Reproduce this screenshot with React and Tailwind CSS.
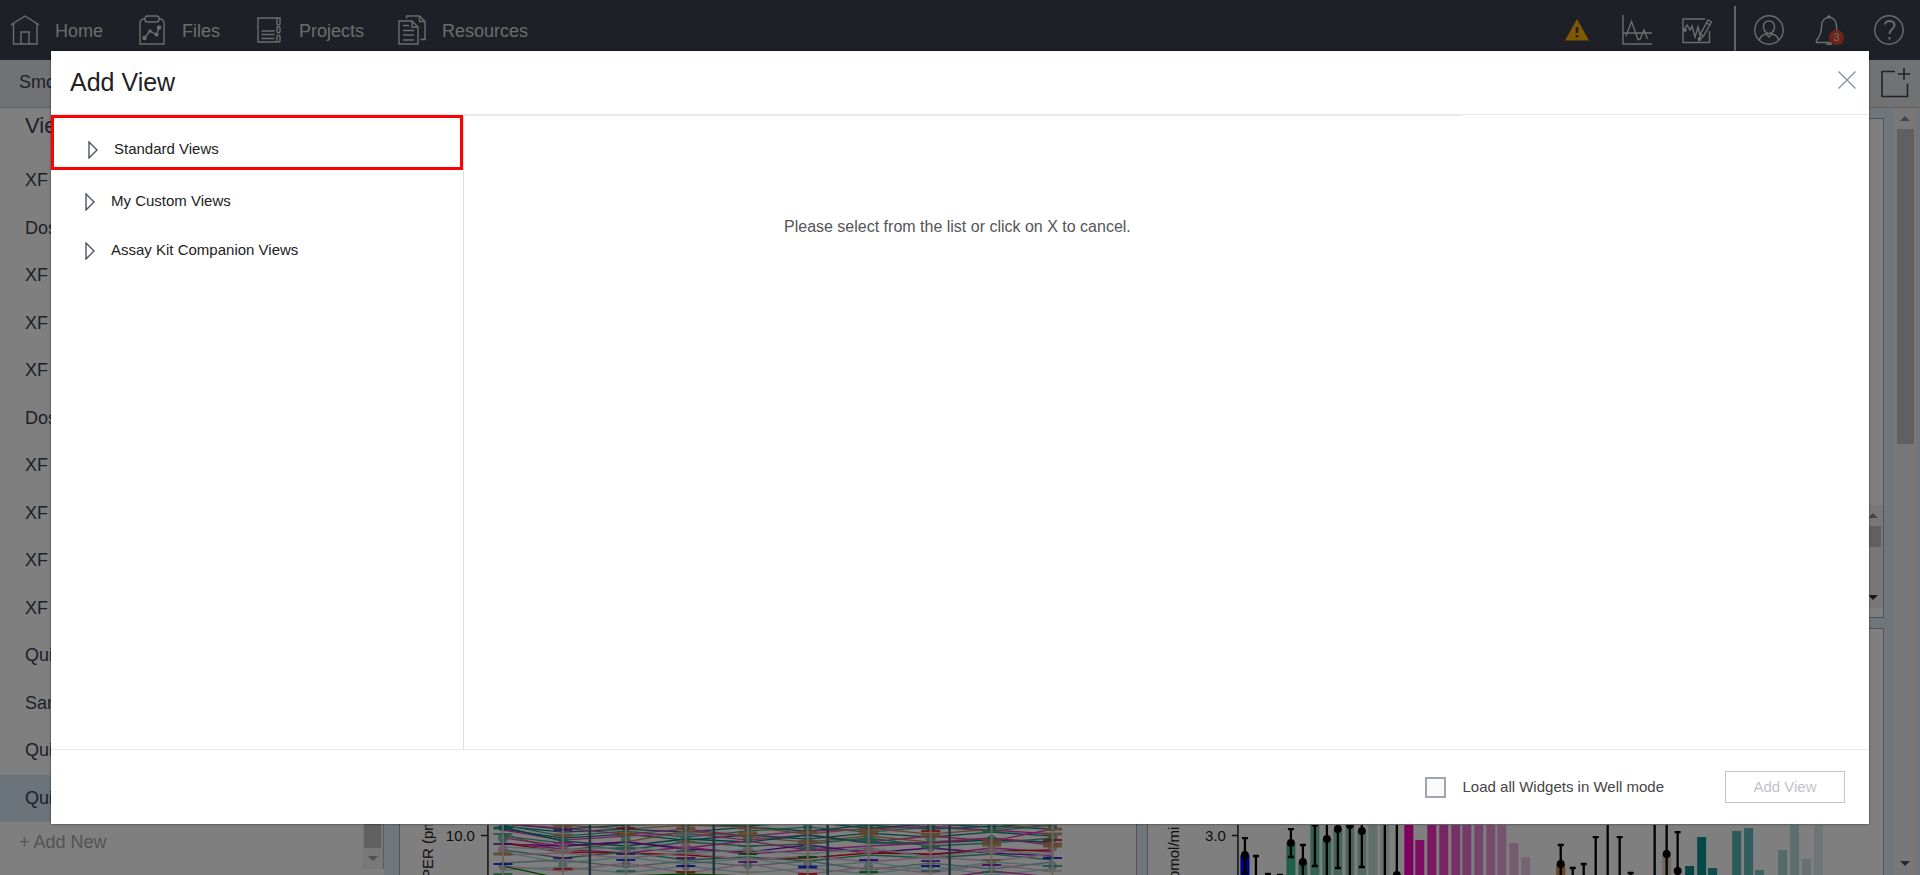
import React from "react";

const VIEWS = ["XF", "Dose", "XF", "XF", "XF", "Dose", "XF", "XF", "XF", "XF", "Quick", "Sam", "Quick", "Quick"];

const TEAL = "#0a8080";
const GREEN = "#3ea58c";
const MAGENTA = "#e838b8";
const BROWN = "#c08858";
const PALE = "#a8d8d8";
const PINK = "#eab0dc";
const RED = "#e81010";
const BLUE = "#1010f0";
const PURPLE = "#7818b8";
const SAND = "#d8ccb8";
const DKGREEN = "#008000";
const SKY = "#90b8b8";

const COLS = [503, 563, 626, 686, 748, 808, 869, 931, 992, 1053];

const LINES = [
  [TEAL, [824, 829, 825, 824, 826, 822, 828, 824, 827, 822]],
  [TEAL, [826, 832, 829, 832, 827, 831, 825, 829, 826, 829]],
  [GREEN, [825, 836, 831, 837, 831, 827, 832, 827, 831, 825]],
  [MAGENTA, [824, 828, 834, 829, 836, 831, 829, 826, 830, 834]],
  [BROWN, [822, 825, 829, 825, 827, 834, 828, 834, 829, 824]],
  [TEAL, [829, 838, 834, 840, 835, 839, 833, 837, 832, 836]],
  [MAGENTA, [830, 840, 836, 833, 840, 835, 842, 836, 841, 829]],
  [BROWN, [834, 851, 842, 831, 837, 842, 836, 842, 838, 843]],
  [TEAL, [827, 841, 846, 839, 842, 835, 843, 843, 840, 842]],
  [GREEN, [836, 843, 850, 842, 846, 844, 838, 846, 843, 838]],
  [MAGENTA, [838, 846, 842, 848, 841, 850, 846, 843, 838, 845]],
  [PURPLE, [844, 846, 842, 849, 852, 845, 853, 848, 853, 856]],
  [MAGENTA, [843, 849, 853, 847, 854, 850, 851, 855, 848, 852]],
  [RED, [843, 852, 853, 855, 859, 858, 853, 854, 851, 850]],
  [PALE, [847, 850, 847, 853, 850, 854, 848, 857, 850, 855]],
  [GREEN, [850, 858, 852, 860, 857, 861, 855, 858, 854, 860]],
  [PINK, [855, 853, 858, 853, 860, 856, 862, 857, 861, 854]],
  [PALE, [852, 863, 857, 864, 858, 867, 862, 871, 862, 866]],
  [SKY, [863, 860, 867, 861, 866, 861, 870, 863, 869, 862]],
  [PINK, [866, 871, 863, 873, 864, 874, 867, 873, 864, 872]],
  [PALE, [870, 867, 873, 866, 873, 868, 874, 866, 875, 869]],
  [DKGREEN, [866, 879, 876, 874, 876, 880, 876, 880, 879, 880]],
  [MAGENTA, [890, 886, 888, 885, 888, 886, 884, 880, 871, 877]],
];

const MARKS = [
  [[828, TEAL, 3], [834, GREEN, 2], [844, PURPLE, 2], [854, BROWN, 3], [864, BLUE, 2], [874, GREEN, 2]],
  [[826, BROWN, 4], [830, PURPLE, 2], [835, BROWN, 3], [843, MAGENTA, 2], [851, SAND, 3], [858, PURPLE, 2], [869, RED, 2]],
  [[828, RED, 2], [834, BROWN, 4], [848, GREEN, 2], [854, PURPLE, 2], [860, BLUE, 2], [871, GREEN, 2]],
  [[828, BROWN, 3], [834, SKY, 4], [842, BROWN, 2], [851, GREEN, 2], [858, PURPLE, 2], [866, BLUE, 2], [872, RED, 2]],
  [[828, BROWN, 3], [834, BROWN, 5], [846, GREEN, 2], [854, DKGREEN, 2], [862, PURPLE, 2], [872, SAND, 2]],
  [[832, BROWN, 3], [842, BROWN, 4], [848, GREEN, 3], [857, DKGREEN, 2], [867, BLUE, 3], [874, RED, 2]],
  [[832, BROWN, 7], [841, GREEN, 4], [852, PINK, 2], [860, BLUE, 2], [872, DKGREEN, 2]],
  [[831, RED, 2], [835, BROWN, 5], [847, GREEN, 3], [861, PURPLE, 2], [866, BLUE, 2], [871, GREEN, 2]],
  [[831, GREEN, 3], [843, BROWN, 7], [852, PINK, 2], [860, BROWN, 2], [865, PURPLE, 2], [872, GREEN, 2]],
  [[829, BROWN, 3], [834, BROWN, 3], [840, RED, 2], [845, BROWN, 5], [858, BLUE, 2], [866, GREEN, 2], [871, SAND, 2]],
];

// x centre, top of bar, fill
const BARS = [
  [1245, 855, "#0000ff"],
  [1291, 843, "#3ec096"],
  [1303, 862, "#58b498"],
  [1315, 810, "#66c4a6"],
  [1327, 839, "#74c4ac"],
  [1338, 829, "#88c8b4"],
  [1350, 825, "#98ccbc"],
  [1362, 831, "#a8d0c4"],
  [1373, 810, "#c4dcd4"],
  [1385, 810, "#d4e4de"],
  [1409, 810, "#fc00be"],
  [1420, 840, "#fc18c4"],
  [1432, 810, "#f430c4"],
  [1444, 810, "#f048c8"],
  [1456, 810, "#ec60cc"],
  [1467, 810, "#ec74d0"],
  [1479, 810, "#ec88d4"],
  [1491, 810, "#ec98d8"],
  [1502, 810, "#eca8dc"],
  [1514, 843, "#ecb8e0"],
  [1526, 857, "#ecc8e4"],
  [1561, 864, "#d08844"],
  [1667, 854, "#e0d4c0"],
  [1690, 866, "#088888"],
  [1702, 837, "#0c9090"],
  [1713, 868, "#209898"],
  [1737, 831, "#58b4b4"],
  [1749, 828, "#68bcbc"],
  [1760, 870, "#80c4c4"],
  [1783, 850, "#a8d4d4"],
  [1795, 810, "#b8dcdc"],
  [1807, 859, "#cce4e4"],
  [1819, 810, "#dceaea"],
];

// x centre, upper cap, lower cap, dot
const ERRORS = [
  [1245, 838, 873, 855],
  [1256, 856, 890, null],
  [1268, 874, 890, null],
  [1280, 875, 890, null],
  [1291, 829, 857, 843],
  [1303, 845, 890, 862],
  [1315, 810, 866, 823],
  [1327, 810, 890, 839],
  [1338, 810, 868, 829],
  [1350, 810, 890, 825],
  [1362, 810, 867, 831],
  [1385, 810, 890, null],
  [1397, 810, 890, 875],
  [1561, 845, 890, 864],
  [1573, 868, 890, null],
  [1584, 864, 890, null],
  [1596, 837, 890, null],
  [1608, 810, 890, null],
  [1620, 837, 890, null],
  [1631, 873, 890, null],
  [1655, 810, 890, null],
  [1667, 810, 890, 854],
  [1678, 832, 890, 871],
];

function Stroke({ className, children, ...rest }) {
  return (
    <svg aria-hidden="true" fill="none" stroke="currentColor" strokeWidth="1.4" className={className} {...rest}>
      {children}
    </svg>
  );
}

function HomeIcon() {
  return (
    <Stroke className="h-[30px] w-[30px] shrink-0" viewBox="0 0 30 30">
      <path d="M1 9.800 15 1l14 8.800M3.500 8.500V29h23.500V8.500M11 29V17h8v12" />
    </Stroke>
  );
}

function FilesIcon() {
  return (
    <Stroke className="h-[30px] w-[26px] shrink-0" viewBox="0 0 26 30">
      <path d="M6 4H3.500L1 6.500V29h24V6.500L22.500 4H20" />
      <rect x="6" y="1" width="14" height="6" rx="2.500" />
      <path d="M5.500 23 11 16l6.500 4L20 12.500" />
      <g fill="currentColor" stroke="none">
        <circle cx="5.500" cy="23" r="2.200" />
        <circle cx="11" cy="16" r="1.800" />
        <circle cx="17.500" cy="19.500" r="2" />
        <circle cx="20" cy="12.500" r="2.200" />
      </g>
    </Stroke>
  );
}

function ProjectsIcon() {
  return (
    <Stroke className="h-[26px] w-6 shrink-0" viewBox="0 0 24 26">
      <path d="M20 25H1V1h22v6l-2.500 1.500M20 1v7" />
      <path d="M4.500 14h13M4.500 17.500h13M4.500 21.500h13" />
      <rect x="20" y="9.500" width="3" height="6.500" rx="1.500" />
      <rect x="20" y="18.500" width="3" height="6.500" rx="1" />
    </Stroke>
  );
}

function ResourcesIcon() {
  return (
    <Stroke className="h-[30px] w-7 shrink-0" viewBox="0 0 28 30">
      <path d="M1 6h13l6 6v17H1zM14 6v6h6" />
      <path d="M5 10.500h6M5 15.500h11M5 20h11M5 25h11" />
      <path d="M8.500 3.500V1h13l5.500 5.500v18h-4.500M21.500 1v5.500H27" />
    </Stroke>
  );
}

function Arrow({ down, className }) {
  return (
    <svg aria-hidden="true" viewBox="0 0 10 5" className={className} fill="currentColor">
      {down ? <path d="M0 0h10L5 5z" /> : <path d="M0 5h10L5 0z" />}
    </svg>
  );
}

function TopNav() {
  const links = [
    ["Home", HomeIcon, "w-[129px] gap-[15px]"],
    ["Files", FilesIcon, "w-[118px] gap-[17px]"],
    ["Projects", ProjectsIcon, "w-[141px] gap-[18px]"],
    ["Resources", ResourcesIcon, "gap-4"],
  ];
  return (
    <header className="flex h-[60px] shrink-0 items-center bg-[#3a424e] text-[#d8d8d8]">
      <nav className="flex items-center pl-[10px] text-[18px]">
        {links.map(([label, Icon, cls]) => (
          <a key={label} href="#" className={"flex items-center " + cls}>
            <Icon />
            <span className="pt-[2px]">{label}</span>
          </a>
        ))}
      </nav>
      <div className="ml-auto flex items-center pr-4">
        <button aria-label="Warnings" className="mr-[33px]">
          <svg viewBox="0 0 24 22" className="h-[22px] w-6">
            <path d="M12 0 24 21.500H0z" fill="#ffb000" />
            <path d="M12 8v6M12 16v2.500" stroke="#3a424e" strokeWidth="2.600" />
          </svg>
        </button>
        <button aria-label="Kinetic graph" className="mr-[30px]">
          <Stroke className="h-[30px] w-[30px]" viewBox="0 0 30 30">
            <path d="M1 0v29h29M1 18h29M4 21 9.500 6.500 16 24.500h2L22 15l3.500 9" />
          </Stroke>
        </button>
        <button aria-label="Edit graph" className="mr-[22px]">
          <Stroke className="h-[30px] w-[30px]" viewBox="0 0 30 30">
            <path d="M23 4H1v23.500h26.500V16" />
            <path d="m2 15 3-5 3 5 2-4 3 11 3-10 2 8" />
            <path d="m17 25 1.500-6L26 5l3.500 2L21.500 21zM24.500 8l3.500 2M18.500 19l3 2" />
            <circle cx="3" cy="15" r="1.200" fill="currentColor" />
            <circle cx="17.500" cy="24" r="1.200" fill="currentColor" />
          </Stroke>
        </button>
        <div className="mr-[18px] h-12 w-[2px] bg-[#c4c4c4]" />
        <button aria-label="Account" className="mr-[30px]">
          <Stroke className="h-[30px] w-[30px]" viewBox="0 0 30 30">
            <circle cx="15" cy="15" r="14.200" />
            <path d="M15 6c-3.500 0-5.500 2.500-5.500 6s2.500 6.500 5.500 6.500 5.500-3 5.500-6.500S18.500 6 15 6zM5.500 25c.5-3.500 2.500-5 6.500-6l3 3 3-3c4 1 6 2.500 6.500 6" />
          </Stroke>
        </button>
        <button aria-label="Notifications, 3 new" className="relative mr-[30px]">
          <Stroke className="h-[30px] w-[30px]" viewBox="0 0 30 30">
            <path d="M15 2.500c-5 0-7.500 4-7.500 9 0 6-1 9.500-5 13.500v2.500h25V25c-4-4-5-7.500-5-13.500 0-5-2.500-9-7.500-9zM13.500 2.500c0-2 3-2 3 0M12 29.300h6" />
          </Stroke>
          <span className="absolute right-0 bottom-0 flex size-[15px] items-center justify-center rounded-full bg-[#e04830] text-[11px]">3</span>
        </button>
        <button aria-label="Help">
          <Stroke className="h-[30px] w-[30px]" viewBox="0 0 30 30">
            <circle cx="15" cy="15" r="14.200" />
            <path strokeWidth="2" d="M11 9.500c0-5 9.500-4.500 9.500.5 0 4-5 4-5 9M15.500 22v2.500" />
          </Stroke>
        </button>
      </div>
    </header>
  );
}

function Sidebar() {
  return (
    <aside className="flex w-96 shrink-0 text-[#3a4250]">
      <div className="flex min-w-0 flex-1 flex-col">
        <h2 className="flex h-[49px] shrink-0 items-start pt-[2px] pl-[25px] text-[22px] leading-8">Views</h2>
        <ul className="grid min-h-0 flex-1 auto-rows-fr text-[18px]">
          {VIEWS.map((name, i) => (
            <li key={i} className={i === VIEWS.length - 1 ? "flex items-center bg-[#d4e9f5] pl-[25px]" : "flex items-center pl-[25px]"}>
              {name}
            </li>
          ))}
        </ul>
        <div className="h-[53px] shrink-0 pt-[7px] pl-[19px] text-[18px] text-[#a6a6a6]">
          <button>+ Add New</button>
        </div>
      </div>
      <div className="mb-[6px] flex w-[22px] flex-col items-center border-r border-[#b8b8b8] bg-[#f1f1f1]">
        <div className="mt-[49px] w-[17px] flex-1 bg-[#c1c1c1]" />
        <div className="flex h-[21px] items-center text-[#a0a0a0]">
          <Arrow down className="h-[5px] w-[10px]" />
        </div>
      </div>
    </aside>
  );
}

function LineChart() {
  return (
    <svg viewBox="400 825 736 50" preserveAspectRatio="xMinYMax meet" className="h-[50px] w-full" role="img" aria-label="PER line chart">
      {LINES.map(([color, ys], i) => (
        <polyline key={i} fill="none" stroke={color} strokeWidth="1.300" points={ys.map((y, c) => COLS[c] + "," + y).join(" ")} />
      ))}
      {[590, 714, 828, 950].map((x) => (
        <path key={x} d={`M${x} 820V880`} stroke="#406878" strokeWidth="2.500" />
      ))}
      {COLS.map((x, c) => (
        <g key={x}>
          <circle cx={x} cy={827} r="4.500" fill={TEAL} opacity="0.7" />
          <circle cx={x} cy={838 + (c % 3)} r="5" fill={GREEN} opacity="0.7" />
          <circle cx={x} cy={850 - (c % 2) * 3} r="5" fill={c % 2 ? "#c88cb8" : "#c8a8b8"} opacity="0.75" />
          <circle cx={x} cy={866 - (c % 3)} r="4.500" fill={SKY} opacity="0.8" />
          {MARKS[c].map(([y, color, h]) => (
            <rect key={y} x={x - 9.500} y={y - h / 2} width="19" height={h} fill={color} opacity="0.85" />
          ))}
          <path d={`M${x} 820V880`} stroke={SAND} strokeWidth="2" />
        </g>
      ))}
      <path d="M488 820V880M481 835.500h7" stroke="#222" strokeWidth="1.500" />
      <g fill="#222" fontSize="15">
        <text x="475" y="841" textAnchor="end">10.0</text>
        <text transform="translate(433 879) rotate(-90)">PER (pm</text>
      </g>
    </svg>
  );
}

function BarChart() {
  return (
    <svg viewBox="1148 825 736 50" preserveAspectRatio="xMinYMax meet" className="h-[50px] w-full" role="img" aria-label="Rate bar chart">
      {BARS.map(([x, top, color]) => (
        <rect key={x} x={x - 4.500} y={top} width="9" height={890 - top} fill={color} />
      ))}
      <g stroke="#000" strokeWidth="2.300">
        {ERRORS.map(([x, hi, lo, dot]) => (
          <g key={x}>
            <path d={`M${x} ${hi}V${lo}M${x - 3} ${hi}h6M${x - 3} ${lo}h6`} />
            {dot !== null && <circle cx={x} cy={dot} r="2.800" />}
          </g>
        ))}
      </g>
      <path d="M1238 820V880M1232 835.500h6" stroke="#222" strokeWidth="1.500" />
      <g fill="#222" fontSize="15">
        <text x="1226" y="841" textAnchor="end">3.0</text>
        <text transform="translate(1179 879) rotate(-90)">pmol/mi</text>
      </g>
    </svg>
  );
}

function Workspace() {
  const card = "flex min-w-0 flex-1 border border-[#a0a8ae] bg-white";
  return (
    <main className="flex min-w-0 flex-1 bg-[#e0eef8]">
      <div className="flex min-w-0 flex-1 flex-col gap-[10px] pt-[10px] pr-[10px] pl-[15px]">
        <div className="flex h-[500px] shrink-0 gap-[10px]">
          <section className={card} />
          <section className={card + " items-end justify-end pb-[9px]"}>
            <div className="flex h-[103px] w-[21px] flex-col items-center bg-[#f1f1f1]">
              <div className="flex h-[21px] items-center text-[#888]">
                <Arrow className="h-[5px] w-[10px]" />
              </div>
              <div className="h-[21px] w-[17px] bg-[#c1c1c1]" />
              <div className="mt-auto flex h-[21px] items-center text-[#333]">
                <Arrow down className="h-[5px] w-[10px]" />
              </div>
            </div>
          </section>
        </div>
        <div className="flex min-h-0 flex-1 gap-[10px]">
          <section className={card + " items-end border-b-0"}><LineChart /></section>
          <section className={card + " items-end border-b-0"}><BarChart /></section>
        </div>
      </div>
      <div className="mr-1 flex w-[22px] flex-col items-center bg-[#f1f1f1]">
        <div className="flex h-[21px] items-center text-[#888]">
          <Arrow className="h-[5px] w-[10px]" />
        </div>
        <div className="h-[315px] w-[17px] bg-[#c1c1c1]" />
        <div className="mt-auto flex h-6 items-center text-[#505050]">
          <Arrow down className="h-[5px] w-[10px]" />
        </div>
      </div>
    </main>
  );
}

function TreeItem({ label, highlighted }) {
  return (
    <li className={highlighted ? "h-[55px] border-[3px] border-[#ff0000] pt-[7px] pl-[34px]" : "h-[49px] pl-[34px]"}>
      <button className="flex h-[49px] items-center gap-4 text-[15px] text-[#222]">
        <svg aria-hidden="true" viewBox="0 0 10 18" className="h-[18px] w-[10px]" fill="none" stroke="#4a5564" strokeWidth="1.400">
          <path d="M1 1v16L9 9z" />
        </svg>
        {label}
      </button>
    </li>
  );
}

function AddViewDialog() {
  return (
    <div role="dialog" aria-modal="true" aria-labelledby="dialog-title" className="flex min-w-0 flex-1 flex-col bg-white shadow-[0_0_2px_rgba(0,0,0,0.6)]">
      <div className="flex h-16 shrink-0 items-center justify-between border-b border-[#e6e8ea] pr-3 pl-[19px]">
        <h1 id="dialog-title" className="text-[25px] text-[#222]">Add View</h1>
        <button aria-label="Close" className="mb-[6px]">
          <svg viewBox="0 0 20 20" className="size-5" fill="none" stroke="#8a929c" strokeWidth="1.300">
            <path d="m1.500 1.500 17 17M18.500 1.500l-17 17" />
          </svg>
        </button>
      </div>
      <div className="flex min-h-0 flex-1">
        <div className="w-[413px] shrink-0 border-r border-[#dde0e3]">
          <ul>
            <TreeItem label="Standard Views" highlighted />
            <li className="h-[7px]" />
            <TreeItem label="My Custom Views" />
            <TreeItem label="Assay Kit Companion Views" />
          </ul>
        </div>
        <div className="min-w-0 flex-1">
          <div className="h-px w-[71%] bg-[#e6eaef]" />
          <p className="pt-[99px] pl-80 text-[16px] text-[#555]">Please select from the list or click on X to cancel.</p>
        </div>
      </div>
      <div className="flex h-[75px] shrink-0 items-center justify-end border-t border-[#e6e8ea] pr-6 text-[15px]">
        <label className="mr-[61px] flex items-center gap-[17px] text-[#444]">
          <input type="checkbox" className="size-[21px] appearance-none border-2 border-[#a0a6ae] bg-[#fafafa]" />
          Load all Widgets in Well mode
        </label>
        <button className="h-8 w-[120px] border border-[#bfc5c9] text-[#bfc3c7]">Add View</button>
      </div>
    </div>
  );
}

export default function App() {
  return (
    <div className="relative flex h-screen flex-col overflow-hidden bg-white font-['Liberation_Sans',Arial,sans-serif]">
      <TopNav />
      <div className="flex h-12 shrink-0 items-center justify-between border-b border-[#c0c2c4] bg-[#e2e5e8] pr-[10px] pb-[2px] pl-[19px] text-[18px] text-[#3a4250]">
        <span>Smo</span>
        <button aria-label="New view">
          <Stroke className="h-[30px] w-[30px]" viewBox="0 0 30 30">
            <path strokeWidth="1.600" d="M15 3.500H2v25h25.500V15.500M24 0v12M18 6h12" />
          </Stroke>
        </button>
      </div>
      <div className="flex min-h-0 flex-1">
        <Sidebar />
        <Workspace />
      </div>
      <div className="absolute inset-0 flex bg-black/50 p-[51px]">
        <AddViewDialog />
      </div>
    </div>
  );
}
